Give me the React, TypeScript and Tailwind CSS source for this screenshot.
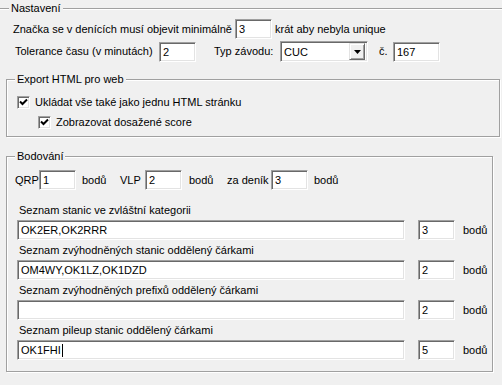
import type { ReactNode } from "react"
import clsx from "clsx"

const sunken =
    "border border-t-[#a0a0a0] border-l-[#a0a0a0] border-r-white border-b-white shadow-[inset_1px_1px_0_#696969,inset_-1px_-1px_0_#e3e3e3]"

function GroupBox({
    label,
    className,
    legendClass,
    children,
}: {
    label: string
    className?: string
    legendClass?: string
    children: ReactNode
}) {
    return (
        <fieldset
            className={clsx(
                "border border-[#a0a0a0] shadow-[inset_1px_1px_0_#fff,1px_1px_0_#fff]",
                className
            )}
        >
            <legend className={clsx("bg-[#f0f0f0] px-[2px] leading-[14px]", legendClass)}>
                {label}
            </legend>
            {children}
        </fieldset>
    )
}

function TextBox({
    value,
    className,
    caret,
}: {
    value?: string
    className?: string
    caret?: boolean
}) {
    return (
        <div className={clsx("flex h-[20px] items-center bg-white pl-[3px]", sunken, className)}>
            <span className="leading-[14px]">{value}</span>
            {caret && <span className="ml-[1px] h-[13px] w-[1px] bg-black" />}
        </div>
    )
}

function CheckBox() {
    return (
        <div className={clsx("flex h-[13px] w-[13px] shrink-0 items-center justify-center bg-white", sunken)}>
            <svg width="9" height="9" viewBox="0 0 9 9">
                <path d="M1 3.5 L3.5 6 L8 1.5" fill="none" stroke="#000" strokeWidth="2" />
            </svg>
        </div>
    )
}

function ComboBox({ value }: { value: string }) {
    return (
        <div className={clsx("flex h-[21px] w-[88px] items-center bg-white pl-[3px] pr-[2px]", sunken)}>
            <span className="flex-1 leading-[14px]">{value}</span>
            <div className="flex h-[17px] w-[16px] items-center justify-center border border-t-[#e3e3e3] border-l-[#e3e3e3] border-r-[#696969] border-b-[#696969] bg-[#f0f0f0] shadow-[inset_1px_1px_0_#fff,inset_-1px_-1px_0_#a0a0a0]">
                <svg width="7" height="4" viewBox="0 0 7 4">
                    <path d="M0 0 H7 L3.5 4 Z" fill="#000" />
                </svg>
            </div>
        </div>
    )
}

const lists = [
    { label: "Seznam stanic ve zvláštní kategorii", value: "OK2ER,OK2RRR", points: "3" },
    { label: "Seznam zvýhodněných stanic oddělený čárkami", value: "OM4WY,OK1LZ,OK1DZD", points: "2" },
    { label: "Seznam zvýhodněných prefixů oddělený čárkami", value: "", points: "2" },
    { label: "Seznam pileup stanic oddělený čárkami", value: "OK1FHI", points: "5", caret: true },
]

export default function App() {
    return (
        <div className="h-[385px] w-[502px] overflow-hidden bg-[#f0f0f0] font-['Liberation_Sans',Arial,sans-serif] text-[11px] text-black">
            <GroupBox label="Nastavení" className="ml-[-6px] mt-[1px] h-[420px] w-[540px]" legendClass="ml-[14px]">
                {/* Nastavení rows */}
                <div className="mt-[4px] flex h-[20px] items-center pl-[18px]">
                    <span className="w-[222px]">Značka se v denících musí objevit minimálně</span>
                    <TextBox value="3" className="w-[37px]" />
                    <span className="ml-[3px]">krát aby nebyla unique</span>
                </div>
                <div className="mt-[2px] flex h-[21px] items-center pl-[20px]">
                    <span className="w-[144px]">Tolerance času (v minutách)</span>
                    <TextBox value="2" className="w-[37px]" />
                    <span className="ml-[18px] w-[66px]">Typ závodu:</span>
                    <ComboBox value="CUC" />
                    <span className="ml-[11px] w-[14px]">č.</span>
                    <TextBox value="167" className="w-[47px]" />
                </div>

                {/* Export */}
                <GroupBox label="Export HTML pro web" className="ml-[11px] mt-[10px] w-[494px] pb-[4px]" legendClass="ml-[8px]">
                    <div className="mt-[6px] flex h-[20px] items-center gap-[5px] pl-[10px]">
                        <CheckBox />
                        <span>Ukládat vše také jako jednu HTML stránku</span>
                    </div>
                    <div className="flex h-[20px] items-center gap-[5px] pl-[31px]">
                        <CheckBox />
                        <span>Zobrazovat dosažené score</span>
                    </div>
                </GroupBox>

                {/* Bodování */}
                <GroupBox label="Bodování" className="ml-[11px] mt-[12px] w-[487px] pb-[11px]" legendClass="ml-[8px]">
                    <div className="mt-[7px] flex h-[20px] items-center pl-[8px]">
                        <span className="w-[24px]">QRP</span>
                        <TextBox value="1" className="w-[37px]" />
                        <span className="ml-[6px] w-[38px]">bodů</span>
                        <span className="w-[25px]">VLP</span>
                        <TextBox value="2" className="w-[37px]" />
                        <span className="ml-[7px] w-[38px]">bodů</span>
                        <span className="w-[44px]">za deník</span>
                        <TextBox value="3" className="w-[37px]" />
                        <span className="ml-[6px]">bodů</span>
                    </div>
                    <div className="mt-[13px] flex flex-col gap-[3px] pl-[10px]">
                        {lists.map((item) => (
                            <div key={item.label} className="flex flex-col gap-[3px]">
                                <span className="ml-[2px] leading-[14px]">{item.label}</span>
                                <div className="flex items-center">
                                    <TextBox value={item.value} caret={item.caret} className="w-[388px]" />
                                    <TextBox value={item.points} className="ml-[13px] w-[37px]" />
                                    <span className="ml-[8px]">bodů</span>
                                </div>
                            </div>
                        ))}
                    </div>
                </GroupBox>
            </GroupBox>
        </div>
    )
}
